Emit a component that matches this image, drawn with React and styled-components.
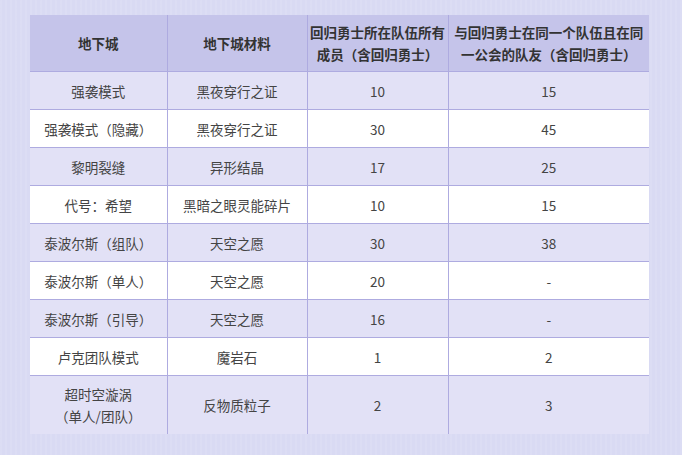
import React from 'react';
import styled, { createGlobalStyle } from 'styled-components';

const GlobalStyle = createGlobalStyle`
  html, body {
    margin: 0;
    padding: 0;
    background: #dadaf3;
    font-family: "Noto Sans CJK SC", "Noto Sans", sans-serif;
  }
`;

const Page = styled.div`
  width: 682px;
  height: 455px;
  box-sizing: border-box;
  padding: 15px 0 0 30px;
  background:
    repeating-linear-gradient(90deg, rgba(255,255,255,0.08) 0 2px, rgba(0,0,0,0) 2px 5px),
    #d9daf3;
`;

const Table = styled.table`
  border-collapse: collapse;
  table-layout: fixed;
  width: 619px;
  color: #444;
  font-size: 13.5px;
`;

const Head = styled.th`
  background: #c5c4ea;
  color: #333;
  font-weight: bold;
  height: 56px;
  padding: 0 2px;
  line-height: 22px;
  border-left: 1px solid #aeabe0;
  border-bottom: 1px solid #aeabe0;
  text-align: center;
  &:first-child { border-left: none; }
`;

const Row = styled.tr`
  background: ${p => (p.$odd ? '#e2e1f6' : '#ffffff')};
`;

const Cell = styled.td`
  height: ${p => (p.$tall ? '58px' : '37px')};
  padding: 0 2px;
  line-height: 22px;
  text-align: center;
  border-left: 1px solid #aeabe0;
  border-bottom: ${p => (p.$last ? 'none' : '1px solid #aeabe0')};
  &:first-child { border-left: none; }
`;

const rows = [
  ['强袭模式', '黑夜穿行之证', '10', '15'],
  ['强袭模式（隐藏）', '黑夜穿行之证', '30', '45'],
  ['黎明裂缝', '异形结晶', '17', '25'],
  ['代号：希望', '黑暗之眼灵能碎片', '10', '15'],
  ['泰波尔斯（组队）', '天空之愿', '30', '38'],
  ['泰波尔斯（单人）', '天空之愿', '20', '-'],
  ['泰波尔斯（引导）', '天空之愿', '16', '-'],
  ['卢克团队模式', '魔岩石', '1', '2'],
  [<>超时空漩涡<br />（单人/团队）</>, '反物质粒子', '2', '3'],
];

export default function App() {
  return (
    <Page>
      <GlobalStyle />
      <Table>
        <colgroup>
          <col style={{ width: 137 }} />
          <col style={{ width: 140 }} />
          <col style={{ width: 141 }} />
          <col style={{ width: 201 }} />
        </colgroup>
        <thead>
          <tr>
            <Head>地下城</Head>
            <Head>地下城材料</Head>
            <Head>回归勇士所在队伍所有成员（含回归勇士）</Head>
            <Head>与回归勇士在同一个队伍且在同一公会的队友（含回归勇士）</Head>
          </tr>
        </thead>
        <tbody>
          {rows.map((r, i) => (
            <Row key={i} $odd={i % 2 === 0}>
              {r.map((c, j) => (
                <Cell key={j} $tall={i === rows.length - 1} $last={i === rows.length - 1}>{c}</Cell>
              ))}
            </Row>
          ))}
        </tbody>
      </Table>
    </Page>
  );
}
